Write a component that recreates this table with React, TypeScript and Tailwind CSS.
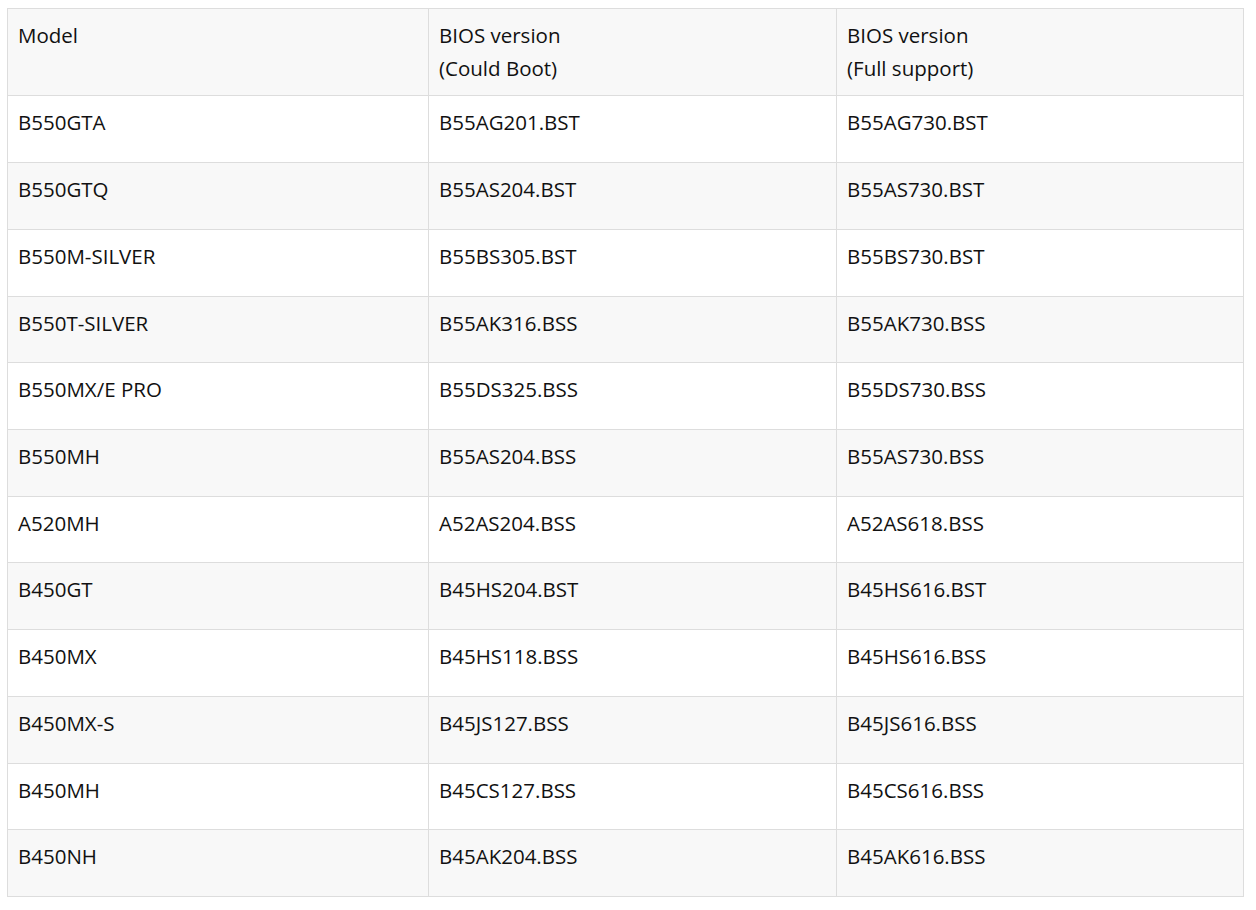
import React from 'react';

type Row = { model: string; boot: string; full: string; h: string };

const rows: Row[] = [
  { model: 'B550GTA', boot: 'B55AG201.BST', full: 'B55AG730.BST', h: 'h-[67px]' },
  { model: 'B550GTQ', boot: 'B55AS204.BST', full: 'B55AS730.BST', h: 'h-[67px]' },
  { model: 'B550M-SILVER', boot: 'B55BS305.BST', full: 'B55BS730.BST', h: 'h-[67px]' },
  { model: 'B550T-SILVER', boot: 'B55AK316.BSS', full: 'B55AK730.BSS', h: 'h-[66px]' },
  { model: 'B550MX/E PRO', boot: 'B55DS325.BSS', full: 'B55DS730.BSS', h: 'h-[67px]' },
  { model: 'B550MH', boot: 'B55AS204.BSS', full: 'B55AS730.BSS', h: 'h-[67px]' },
  { model: 'A520MH', boot: 'A52AS204.BSS', full: 'A52AS618.BSS', h: 'h-[66px]' },
  { model: 'B450GT', boot: 'B45HS204.BST', full: 'B45HS616.BST', h: 'h-[67px]' },
  { model: 'B450MX', boot: 'B45HS118.BSS', full: 'B45HS616.BSS', h: 'h-[67px]' },
  { model: 'B450MX-S', boot: 'B45JS127.BSS', full: 'B45JS616.BSS', h: 'h-[67px]' },
  { model: 'B450MH', boot: 'B45CS127.BSS', full: 'B45CS616.BSS', h: 'h-[66px]' },
  { model: 'B450NH', boot: 'B45AK204.BSS', full: 'B45AK616.BSS', h: 'h-[67px]' },
];

const cell = 'border border-[#dddddd] align-top pl-[10px] pt-[10px] pr-3 font-normal text-left';

export default function App() {
  return (
    <div className="min-h-screen bg-white pt-[8px] pl-[7px] font-['Open_Sans',sans-serif] text-[20.5px] leading-[33px] text-[#111111]">
      <table className="border-collapse table-fixed w-[1236px]">
        <colgroup>
          <col className="w-[421px]" />
          <col className="w-[408px]" />
          <col className="w-[407px]" />
        </colgroup>
        <thead>
          <tr className="h-[87px] bg-[#f8f8f8]">
            <th className={cell}>Model</th>
            <th className={cell}>
              BIOS version
              <br />
              (Could Boot)
            </th>
            <th className={cell}>
              BIOS version
              <br />
              (Full support)
            </th>
          </tr>
        </thead>
        <tbody>
          {rows.map((r, i) => (
            <tr key={r.model} className={`${r.h} ${i % 2 === 1 ? 'bg-[#f8f8f8]' : 'bg-white'}`}>
              <td className={cell}>{r.model}</td>
              <td className={cell}>{r.boot}</td>
              <td className={cell}>{r.full}</td>
            </tr>
          ))}
        </tbody>
      </table>
    </div>
  );
}
